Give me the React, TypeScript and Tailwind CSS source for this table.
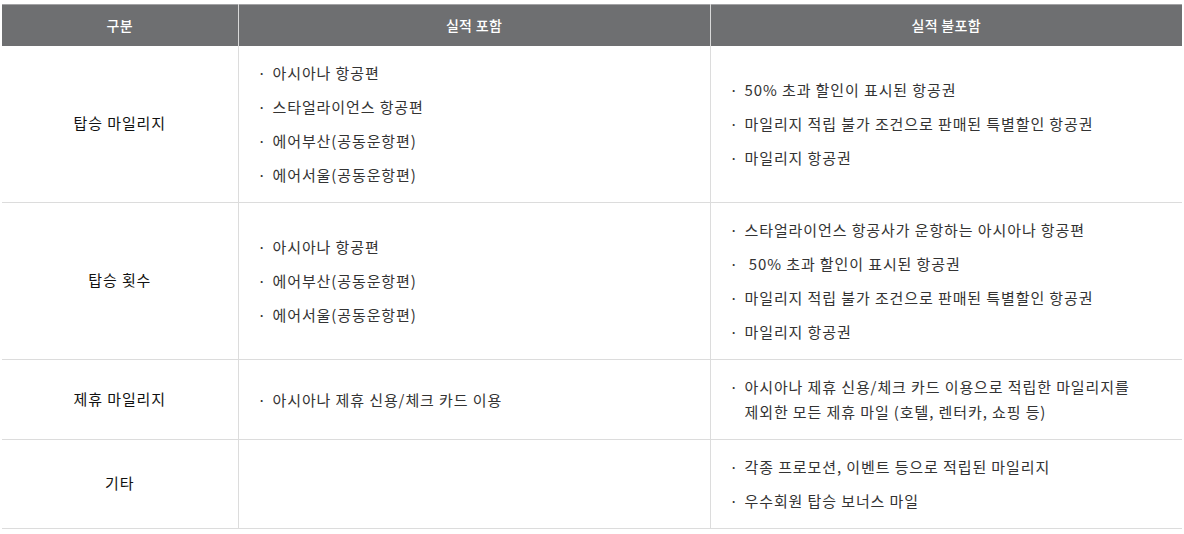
import React from 'react';

interface Row {
  label: string;
  included: string[];
  excluded: string[];
}

const rows: Row[] = [
  {
    label: '탑승 마일리지',
    included: ['아시아나 항공편', '스타얼라이언스 항공편', '에어부산(공동운항편)', '에어서울(공동운항편)'],
    excluded: ['50% 초과 할인이 표시된 항공권', '마일리지 적립 불가 조건으로 판매된 특별할인 항공권', '마일리지 항공권'],
  },
  {
    label: '탑승 횟수',
    included: ['아시아나 항공편', '에어부산(공동운항편)', '에어서울(공동운항편)'],
    excluded: [
      '스타얼라이언스 항공사가 운항하는 아시아나 항공편',
      '\u00a050% 초과 할인이 표시된 항공권',
      '마일리지 적립 불가 조건으로 판매된 특별할인 항공권',
      '마일리지 항공권',
    ],
  },
  {
    label: '제휴 마일리지',
    included: ['아시아나 제휴 신용/체크 카드 이용'],
    excluded: ['아시아나 제휴 신용/체크 카드 이용으로 적립한 마일리지를 제외한 모든 제휴 마일 (호텔, 렌터카, 쇼핑 등)'],
  },
  {
    label: '기타',
    included: [],
    excluded: ['각종 프로모션, 이벤트 등으로 적립된 마일리지', '우수회원 탑승 보너스 마일'],
  },
];

const BulletList: React.FC<{ items: string[] }> = ({ items }) => (
  <ul className="flex flex-col gap-[9px]">
    {items.map((item, i) => (
      <li key={i} className="relative pl-[34px] pr-[20px] leading-[25px] break-keep">
        <span className="absolute left-[19px] top-0">·</span>
        {item}
      </li>
    ))}
  </ul>
);

export default function App() {
  return (
    <div
      className="bg-white pt-[4px] px-[2px] min-h-screen"
      style={{ fontFamily: '"Noto Sans CJK KR", "Noto Sans", sans-serif' }}
    >
      <table className="w-[1180px] border-collapse table-fixed">
        <colgroup>
          <col className="w-[236px]" />
          <col className="w-[472px]" />
          <col className="w-[472px]" />
        </colgroup>
        <thead>
          <tr className="bg-[#6e6f71] border-t border-[#a3a3a5] text-white text-[14px] tracking-[0.3px] h-[41px]">
            <th className="font-medium">구분</th>
            <th className="font-medium border-l border-[#d9d9d9]">실적 포함</th>
            <th className="font-medium border-l border-[#d9d9d9]">실적 불포함</th>
          </tr>
        </thead>
        <tbody className="text-[15px] tracking-[0.9px] text-[#333]">
          {rows.map((row) => (
            <tr key={row.label} className="border-b border-[#dcdcdc]">
              <td className="text-center align-middle text-[#111]">{row.label}</td>
              <td className="border-l border-[#dcdcdc] align-middle py-[14.5px]">
                <BulletList items={row.included} />
              </td>
              <td className="border-l border-[#dcdcdc] align-middle py-[14.5px]">
                <BulletList items={row.excluded} />
              </td>
            </tr>
          ))}
        </tbody>
      </table>
    </div>
  );
}
